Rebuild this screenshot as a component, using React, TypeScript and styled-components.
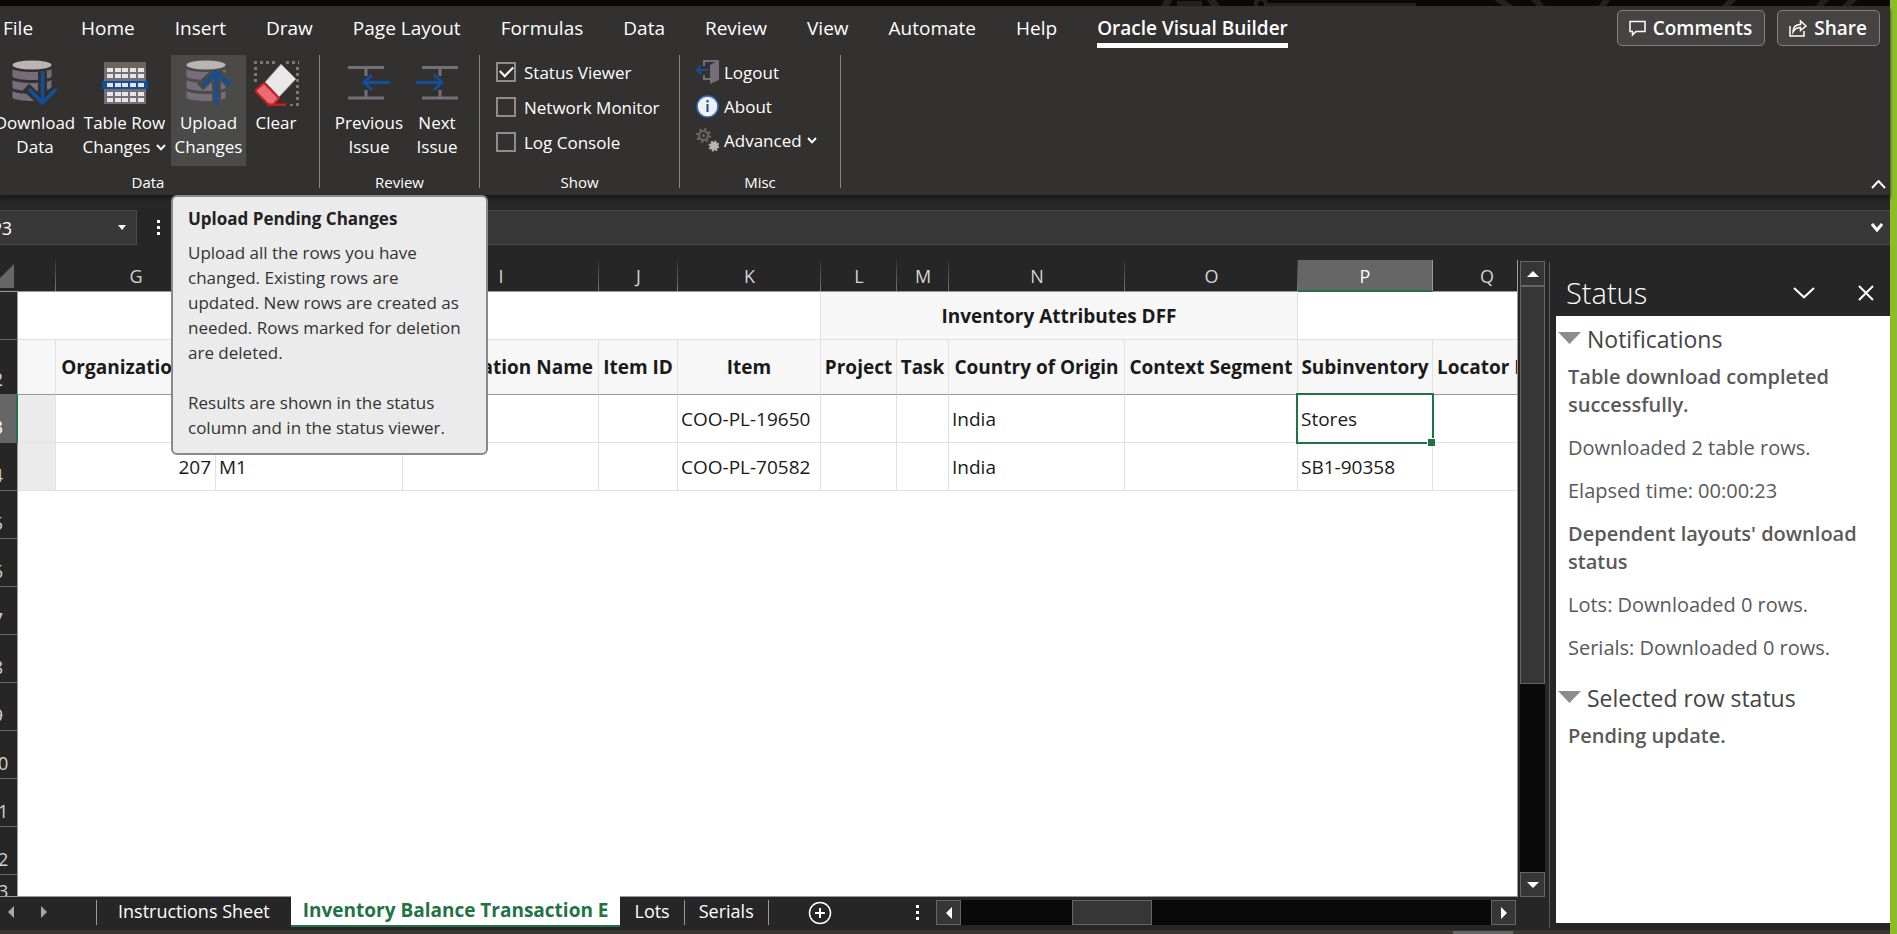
import React from "react";
import styled, { createGlobalStyle, css } from "styled-components";

const color = {
  ribbon: "#32312f",
  hover: "#4a4a48",
  chrome: "#262626",
  field: "#383838",
  line: "#666666",
  green: "#217346",
  blue: "#124f98",
  iconGrey: "#756d78",
};

const GlobalStyle = createGlobalStyle`
  * { box-sizing: border-box; }
  body { margin: 0; background: ${color.chrome}; font-family: "Open Sans", "Noto Sans", sans-serif; }
  button, input { font: inherit; color: inherit; margin: 0; padding: 0; border: 0; background: none; }
  svg { display: block; flex: none; }
  p, h2, h3 { margin: 0; font-size: inherit; font-weight: 400; }
`;

const Screen = styled.div`
  display: flex;
  height: 100vh;
  overflow: hidden;
  color: #fff;
`;
const Window = styled.div`
  flex: 1;
  min-width: 0;
  display: flex;
  flex-direction: column;
`;
const Edge = styled.div`
  width: 7px;
  background: #8bbd27;
`;
const TitleStrip = styled.div`
  height: 6px;
  flex: none;
  display: flex;
  justify-content: flex-end;
  background: #090909;
  overflow: hidden;
`;

/* ---------- ribbon ---------- */
const Ribbon = styled.header`
  flex: none;
  height: 189px;
  background: ${color.ribbon};
  position: relative;
  z-index: 2;
  box-shadow: 0 3px 3px #1a1a19;
`;
const TabRow = styled.div`
  display: flex;
  justify-content: space-between;
  height: 49px;
  padding: 4px 10px 0 3px;
`;
const Tabs = styled.nav`
  display: flex;
  gap: 40px;
  font-size: 19px;
  line-height: 36px;
`;
const Tab = styled.a<{ $active?: boolean }>`
  height: 38px;
  color: #fff;
  text-decoration: none;
  white-space: nowrap;
  &:first-child {
    margin-right: 8px;
  }
  ${(p) =>
    p.$active &&
    css`
      font-weight: 600;
      border-bottom: 5px solid #fff;
    `}
`;
const Actions = styled.div`
  display: flex;
  gap: 12px;
`;
const ActionButton = styled.button`
  display: flex;
  align-items: center;
  gap: 7px;
  height: 36px;
  padding: 0 12px 0 11px;
  border: 1px solid #85837f;
  border-radius: 5px;
  background: #454442;
  font-size: 19px;
  font-weight: 600;
`;
const Groups = styled.div`
  display: flex;
  margin-left: -23px;
`;
const Group = styled.section<{ $width: number }>`
  width: ${(p) => p.$width}px;
  height: 133px;
  display: flex;
  flex-direction: column;
  justify-content: space-between;
  border-right: 1px solid #8a8886;
`;
const GroupTitle = styled.h2`
  font-size: 15px;
  line-height: 12px;
  text-align: center;
`;
const ButtonRow = styled.div<{ $pad: number }>`
  display: flex;
  padding-left: ${(p) => p.$pad}px;
`;
const ToolWrap = styled.div`
  position: relative;
`;
const Tool = styled.button<{ $width: number; $hover?: boolean }>`
  display: flex;
  flex-direction: column;
  align-items: center;
  gap: 5px;
  width: ${(p) => p.$width}px;
  height: 111px;
  padding-top: 5px;
  background: ${(p) => (p.$hover ? color.hover : "none")};
  font-size: 17px;
  line-height: 24px;
  white-space: nowrap;
`;
const ToolText = styled.span`
  display: flex;
  align-items: center;
  justify-content: center;
  gap: 6px;
`;
const Column = styled.div<{ $gap: number }>`
  display: flex;
  flex-direction: column;
  gap: ${(p) => p.$gap}px;
  padding: 5px 0 0 16px;
  font-size: 17px;
`;
const CheckLabel = styled.label`
  display: flex;
  align-items: center;
  gap: 8px;
  height: 24px;
`;
const CheckBox = styled.input`
  appearance: none;
  width: 20px;
  height: 20px;
  border: 2px solid #8f8d8b;
  display: grid;
  place-items: center;
  &:checked::after {
    content: "";
    width: 11px;
    height: 6px;
    margin-bottom: 4px;
    border: solid #fff;
    border-width: 0 0 2px 2px;
    rotate: -45deg;
  }
`;
const SmallTool = styled.button`
  display: flex;
  align-items: center;
  gap: 5px;
  height: 24px;
`;
const CollapseButton = styled.button`
  position: absolute;
  right: 4px;
  bottom: 6px;
`;

const Tooltip = styled.div`
  position: absolute;
  top: 140px;
  left: 0;
  width: 317px;
  padding: 9px 15px 13px;
  border: 2px solid #8a8a8a;
  border-radius: 6px;
  background: #ebebeb;
  color: #333;
  font-size: 17px;
  line-height: 25px;
`;
const TooltipTitle = styled.h3`
  margin-bottom: 9px;
  color: #222;
  font-weight: 700;
`;
const TooltipText = styled.p`
  white-space: nowrap;
  & + & {
    margin-top: 25px;
  }
`;

/* ---------- formula bar ---------- */
const FormulaBar = styled.div`
  flex: none;
  display: flex;
  align-items: center;
  height: 65px;
  background: ${color.chrome};
`;
const NameBox = styled.div`
  display: flex;
  align-items: center;
  width: 137px;
  height: 35px;
  padding-right: 10px;
  border: 1px solid #4a4a4a;
  border-left: 0;
  background: ${color.field};
`;
const NameInput = styled.input`
  flex: 1;
  min-width: 0;
  font-size: 18px;
  text-indent: -9px;
`;
const FormulaField = styled.div`
  flex: 1;
  display: flex;
  align-items: center;
  height: 35px;
  margin-left: 20px;
  padding-right: 7px;
  border: 1px solid #4a4a4a;
  border-right: 0;
  background: ${color.field};
`;
const FormulaInput = styled.input`
  flex: 1;
`;
const Dots = styled.div`
  display: flex;
  flex-direction: column;
  gap: 3px;
  margin-left: 20px;
  i {
    width: 3px;
    height: 3px;
    background: #fff;
  }
`;

/* ---------- workspace ---------- */
const Workspace = styled.main`
  flex: 1;
  min-height: 0;
  display: flex;
  background: ${color.chrome};
`;
const Book = styled.div`
  flex: 1;
  min-width: 0;
  display: flex;
  flex-direction: column;
`;
const SheetArea = styled.div`
  flex: 1;
  min-height: 0;
  display: flex;
`;
const GridFrame = styled.div`
  flex: 1;
  min-width: 0;
  overflow: hidden;
  border: solid #999;
  border-width: 0 1px 1px 0;
`;
/* The last column runs on past the frame, so the table is wider than it. */
const Sheet = styled.table`
  width: calc(100% + 24px);
  table-layout: fixed;
  border-collapse: separate;
  border-spacing: 0;
  font-size: 19px;
  line-height: 24px;
  color: #1a1a1a;
  th,
  td {
    padding: 0;
  }
`;
const Letter = styled.th<{ $selected?: boolean; $last?: boolean }>`
  height: 32px;
  border-bottom: 1px solid #999;
  background: ${color.chrome};
  color: #d4d4d4;
  font-size: 18px;
  font-weight: 400;
  ${(p) =>
    !p.$last &&
    css`
      background: linear-gradient(#333, #777) right / 1px 100% no-repeat ${color.chrome};
    `}
  ${(p) =>
    p.$selected &&
    css`
      background: #666;
      color: #fff;
      border-bottom: 2px solid ${color.green};
      border-right: 1px solid #999;
      && {
        padding-top: 1px;
      }
    `}
`;
const RowHead = styled.th<{ $height: number; $selected?: boolean }>`
  height: ${(p) => p.$height}px;
  border-right: 1px solid #999;
  border-bottom: 1px solid ${color.line};
  background: ${color.chrome};
  color: #d4d4d4;
  font-size: 18px;
  font-weight: 400;
  vertical-align: bottom;
  ${(p) =>
    p.$selected &&
    css`
      background: #666;
      border-right: 2px solid ${color.green};
      color: #fff;
    `}
`;
const RowNumber = styled.span`
  display: block;
  width: 36px;
  margin: 0 0 3px -20px;
`;
const Cell = styled.td<{ $align?: "right"; $locked?: boolean }>`
  position: relative;
  border-right: 1px solid #e1e1e1;
  border-bottom: 1px solid #e1e1e1;
  background: ${(p) => (p.$locked ? "#ebebeb" : "#fff")};
  && {
    padding: 1px 4px 0 3px;
  }
  text-align: ${(p) => p.$align || "left"};
  white-space: nowrap;
`;
const HeadCell = styled.th`
  border-right: 1px solid #e1e1e1;
  border-bottom: 1px solid #999;
  background: #f7f7f7;
  font-weight: 700;
  white-space: nowrap;
  overflow: hidden;
`;
const LastHeadCell = styled(HeadCell)`
  text-align: left;
  && {
    padding-left: 4px;
  }
`;
const BandBlank = styled.td<{ $edge?: boolean }>`
  background: #fff;
  border-bottom: 1px solid #e1e1e1;
  border-right: ${(p) => (p.$edge ? "1px solid #e1e1e1" : "0")};
`;
const Band = styled.th`
  background: #f7f7f7;
  border-right: 1px solid #e1e1e1;
  border-bottom: 1px solid #e1e1e1;
  font-weight: 700;
`;
const Blank = styled.td`
  background: #fff;
`;
const Selection = styled.div`
  position: absolute;
  z-index: 1;
  inset: -2px;
  border: 2px solid ${color.green};
  &::after {
    content: "";
    position: absolute;
    right: -3px;
    bottom: -4px;
    width: 7px;
    height: 7px;
    border: solid #fff;
    border-width: 1px 0 0 1px;
    background: ${color.green};
  }
`;

/* ---------- scroll bars ---------- */
const VScroll = styled.div`
  width: 31px;
  padding: 1px 4px 0 2px;
  display: flex;
  flex-direction: column;
`;
const ScrollButton = styled.button`
  flex: none;
  display: grid;
  place-items: center;
  width: 25px;
  height: 25px;
  border: 1px solid ${color.line};
  background: #363636;
`;
const VTrack = styled.div`
  flex: 1;
  background: #090909;
`;
const VThumb = styled.div`
  height: 68%;
  border: 1px solid ${color.line};
  background: #363636;
`;
const HScroll = styled.div`
  width: 580px;
  display: flex;
`;
const HTrack = styled.div`
  flex: 1;
  background: #090909;
`;
const HThumb = styled.div`
  width: 15%;
  height: 25px;
  margin-left: 21%;
  border: 1px solid ${color.line};
  background: #363636;
`;

/* ---------- sheet tabs ---------- */
const SheetBar = styled.footer`
  flex: none;
  display: flex;
  align-items: flex-start;
  height: 33px;
  padding-right: 33px;
`;
const SheetNav = styled.div`
  display: flex;
  gap: 27px;
  width: 96px;
  padding: 9px 0 0 8px;
`;
const SheetTab = styled.button<{ $pad: number; $first?: boolean; $last?: boolean }>`
  height: 25px;
  margin-top: 3px;
  padding: 0 ${(p) => p.$pad}px 3px;
  border: solid #999;
  border-width: 0 ${(p) => (p.$last ? 1 : 0)}px 0 ${(p) => (p.$first ? 1 : 0)}px;
  font-size: 18px;
  line-height: 22px;
  white-space: nowrap;
`;
const ActiveSheet = styled.button`
  height: 31px;
  margin-top: -1px;
  padding: 0 12px 2px;
  border-bottom: 2px solid ${color.green};
  background: #fff;
  color: ${color.green};
  font-size: 19px;
  font-weight: 700;
  line-height: 26px;
  white-space: nowrap;
  z-index: 1;
`;
const AddSheet = styled.button`
  margin: 4px 0 0 39px;
`;
const BarEnd = styled.div`
  display: flex;
  align-items: center;
  gap: 17px;
  height: 25px;
  margin: 3px 0 0 auto;
`;
const StatusStrip = styled.div`
  flex: none;
  display: flex;
  justify-content: flex-end;
  height: 4px;
  padding: 1px 377px 0 0;
  background: #383735;
`;
const StripHandle = styled.div`
  width: 60px;
  background: #666;
`;

/* ---------- status pane ---------- */
const Pane = styled.aside`
  width: 341px;
  flex: none;
  display: flex;
  flex-direction: column;
  margin: 2px 0;
  padding: 0 0 5px 6px;
  border-left: 1px solid #5a5a5a;
`;
const PaneHeader = styled.div`
  display: flex;
  align-items: center;
  height: 54px;
  padding: 8px 16px 0 10px;
`;
const PaneTitle = styled.h2`
  flex: 1;
  font-size: 29px;
  font-weight: 300;
  line-height: 36px;
`;
const PaneButton = styled.button`
  margin-left: 43px;
`;
const PaneBody = styled.div`
  flex: 1;
  padding: 8px 10px 0 0;
  background: #fff;
  color: #595959;
  font-size: 20px;
  line-height: 28px;
  white-space: nowrap;
`;
const SectionTitle = styled.h3`
  display: flex;
  gap: 6px;
  margin-bottom: 9px;
  color: #444;
  font-size: 23px;
  line-height: 30px;
  & > svg {
    margin: 8px 0 0 2px;
  }
`;
const Messages = styled.div`
  display: flex;
  flex-direction: column;
  gap: 15px;
  margin-bottom: 21px;
  padding-left: 12px;
`;
const Message = styled.p<{ $strong?: boolean }>`
  font-weight: ${(p) => (p.$strong ? 600 : 400)};
`;

/* ---------- drawings ---------- */
const Chevron = ({ w, h, stroke = 2, up }: { w: number; h: number; stroke?: number; up?: boolean }) => (
  <svg width={w} height={h} viewBox={`0 0 ${w} ${h}`} fill="none" stroke="currentColor" strokeWidth={stroke}>
    <path d={up ? `M1 ${h - 1} L${w / 2} 1 L${w - 1} ${h - 1}` : `M1 1 L${w / 2} ${h - 1 - stroke / 3} L${w - 1} 1`} />
  </svg>
);
const triangles = {
  up: "M0 6 L6 0 L12 6Z",
  down: "M0 0 L12 0 L6 6Z",
  left: "M6 0 L6 12 L0 6Z",
  right: "M0 0 L6 6 L0 12Z",
};
const Triangle = ({ dir, fill = "#fff" }: { dir: keyof typeof triangles; fill?: string }) => {
  const tall = dir === "left" || dir === "right";
  return (
    <svg width={tall ? 6 : 12} height={tall ? 12 : 6}>
      <path d={triangles[dir]} fill={fill} />
    </svg>
  );
};
const SectionArrow = () => (
  <svg width="23" height="12">
    <path d="M0 0H23L11.500 12Z" fill="#8c8c8c" />
  </svg>
);

const DatabaseIcon = ({ up }: { up?: boolean }) => {
  const arrow = up ? "M30.500 46V13M17 25.500L30.500 12L44 25.500" : "M30.500 11V43M17 29L30.500 43L44 29";
  const halo = up ? "M30.500 46V15M14 27L30.500 11L47 27" : "M30.500 11V40M14 27L30.500 43L46 27";
  return (
    <svg width="46" height="46" viewBox="0 0 46 46" fill="none">
      <g fill={color.iconGrey}>
        <path d="M.5 9C6 13 34 13 39.500 9V17C34 21 6 21 .5 17Z" />
        <path d="M.5 20C6 24 34 24 39.500 20V28C34 32 6 32 .5 28Z" />
        <path d="M.5 31C6 35 34 35 39.500 31V38C34 42 6 42 .5 38Z" />
      </g>
      <path d={halo} stroke={up ? color.hover : color.ribbon} strokeWidth="9" />
      <ellipse cx="20" cy="5" rx="19.500" ry="4.500" fill="#b8b5b3" />
      <path d={arrow} stroke={color.blue} strokeWidth="3.500" />
    </svg>
  );
};
const TableIcon = () => (
  <svg width="46" height="46" viewBox="0 0 46 46">
    <rect x="2" y="2" width="42" height="42" fill={color.iconGrey} />
    <rect x="2" y="2" width="42" height="6" fill="#6b655c" />
    <rect x="0" y="21" width="46" height="8" fill={color.blue} />
    {[8, 14, 23, 32, 38].map((y) =>
      [5, 13, 20, 28, 36].map((x) => <rect key={`${x}-${y}`} x={x} y={y} width="6" height="4" fill="#e6e6e6" />)
    )}
  </svg>
);
const ClearIcon = () => (
  <svg width="46" height="46" viewBox="0 0 46 46">
    <g stroke="#7d7672" strokeWidth="3" strokeDasharray="3 3" fill="none">
      <path d="M1 2.500H22M33 2.500H46" />
      <path d="M2.500 7V23M44.500 7V46" />
      <path d="M37 45.500H46" />
    </g>
    <path d="M28 4L43 19L26 37L12 22Z" fill="#e8e8e8" stroke="#8a8482" />
    <path d="M11 23L26 38L21 44Q18 47 15 44L4 33Q2 31 4 29Z" fill="#ea6a78" stroke="#c4201c" strokeWidth="2" />
    <path d="M15 45H33" stroke="#c4201c" strokeWidth="3" />
  </svg>
);
const IssueIcon = ({ next }: { next?: boolean }) => (
  <svg width="42" height="46" viewBox="0 0 42 46" fill="none" strokeWidth="3">
    <g stroke={color.iconGrey}>
      <path d={next ? "M6 7.500H42M6 38H42M24 9V16M24 30V37" : "M0 7.500H36M0 38H36M18 9V16M18 30V37"} />
    </g>
    <path d={next ? "M0 22.500H25M18 15L26 22.500L18 30" : "M42 22.500H17M24 15L16 22.500L24 30"} stroke={color.blue} />
  </svg>
);
const LogoutIcon = () => (
  <svg width="23" height="24" viewBox="0 0 23 24" fill="none">
    <path d="M8 6V1H22M8 15V19H14" stroke={color.iconGrey} strokeWidth="2" />
    <path d="M14 5L23 0V20L14 24Z" fill={color.iconGrey} />
    <path d="M12 10H1M5 6L1 10L5 14" stroke={color.blue} strokeWidth="2" />
  </svg>
);
const AboutIcon = () => (
  <svg width="23" height="23" viewBox="0 0 23 23">
    <circle cx="11.500" cy="11.500" r="10.500" fill="#f0f0f0" stroke="#2a6fc0" strokeWidth="1.500" />
    <path d="M11.500 9V17M11.500 5V7.500" stroke={color.blue} strokeWidth="2" />
  </svg>
);
const GearsIcon = () => (
  <svg width="23" height="24" viewBox="0 0 23 24" fill="none">
    <circle cx="7.500" cy="7.500" r="6.500" stroke="#6f6964" strokeWidth="2" strokeDasharray="2.100 3" />
    <circle cx="7.500" cy="7.500" r="4.500" stroke="#6f6964" strokeWidth="2" />
    <circle cx="7.500" cy="7.500" r="1.500" fill="#6f6964" />
    <circle cx="18" cy="18" r="4" fill="#b8b5b3" />
    <circle cx="18" cy="18" r="4.500" stroke="#b8b5b3" strokeWidth="2" strokeDasharray="2 1.500" />
  </svg>
);
const CommentIcon = () => (
  <svg width="17" height="17" viewBox="0 0 17 17" fill="none" stroke="#fff" strokeWidth="1.500">
    <path d="M1 1.500H16V11.500H7L3.500 15V11.500H1Z" />
  </svg>
);
const ShareIcon = () => (
  <svg width="18" height="18" viewBox="0 0 18 18" fill="none" stroke="#fff" strokeWidth="1.500">
    <path d="M1 7V17H15V12" />
    <path d="M4 13C4 8 7 5.500 11.500 5.500V2L17 7L11.500 11.500V8.500C8 8.500 6 9.500 4 13Z" />
  </svg>
);
const TitlePattern = () => (
  <svg width="740" height="6" viewBox="0 0 740 6" fill="none" stroke="#222" strokeWidth="7">
    <g transform="translate(14 0)">
      <path d="M13 1H38V6H13Z" fill="#222" stroke="none" />
      <path d="M6 -3L0 8M45 -3L53 8" />
      <circle cx="97" cy="4" r="5" strokeWidth="4" />
      <path d="M104 4.500H252" strokeWidth="3" />
    </g>
    <path d="M344 -4L362 9M381 -4L394 9M460 -5L450 9M585 -3L573 9M679 -4L666 9M707 -4L693 9" strokeWidth="6" />
  </svg>
);

/* ---------- data ---------- */
const ribbonTabs = [
  "File", "Home", "Insert", "Draw", "Page Layout", "Formulas", "Data", "Review", "View", "Automate", "Help",
  "Oracle Visual Builder",
];
interface ColumnInfo {
  id: string;
  width: number;
  letter?: string;
  title?: string;
}
const columns: ColumnInfo[] = [
  { id: "status", width: 38 },
  { id: "orgId", letter: "G", width: 160, title: "Organization ID" },
  { id: "orgCode", width: 187 },
  { id: "orgName", letter: "I", width: 196, title: "Organization Name" },
  { id: "itemId", letter: "J", width: 79, title: "Item ID" },
  { id: "item", letter: "K", width: 143, title: "Item" },
  { id: "project", letter: "L", width: 76, title: "Project" },
  { id: "task", letter: "M", width: 52, title: "Task" },
  { id: "country", letter: "N", width: 176, title: "Country of Origin" },
  { id: "context", letter: "O", width: 173, title: "Context Segment" },
  { id: "subinventory", letter: "P", width: 135, title: "Subinventory" },
];
const dataRows: { n: number; values: Record<string, string> }[] = [
  { n: 3, values: { item: "COO-PL-19650", country: "India", subinventory: "Stores" } },
  { n: 4, values: { orgId: "207", orgCode: "M1", item: "COO-PL-70582", country: "India", subinventory: "SB1-90358" } },
];
const emptyRows = [5, 6, 7, 8, 9, 10, 11, 12];

const RowLabel = ({ n, height, selected }: { n: number; height: number; selected?: boolean }) => (
  <RowHead scope="row" $height={height} $selected={selected}>
    <RowNumber>{n}</RowNumber>
  </RowHead>
);

const SheetGrid = () => (
  <Sheet>
    <colgroup>
      <col width={18} />
      {columns.map((c) => (
        <col key={c.id} width={c.width} />
      ))}
      <col />
    </colgroup>
    <thead>
      <tr>
        <Letter $last>
          <svg width="14" height="24">
            <path d="M14 0V24H-10Z" fill="#666" />
          </svg>
        </Letter>
        {columns.map((c) => (
          <Letter key={c.id} scope="col" $selected={c.letter === "P"}>
            {c.letter}
          </Letter>
        ))}
        <Letter scope="col" $last>
          Q
        </Letter>
      </tr>
    </thead>
    <tbody>
      <tr>
        <RowHead $height={48} />
        <BandBlank colSpan={6} $edge />
        <Band colSpan={4}>Inventory Attributes DFF</Band>
        <BandBlank colSpan={2} />
      </tr>
      <tr>
        <RowLabel n={2} height={55} />
        {columns.map((c) => (
          <HeadCell key={c.id}>{c.title}</HeadCell>
        ))}
        <LastHeadCell>Locator ID</LastHeadCell>
      </tr>
      {dataRows.map((row) => (
        <tr key={row.n}>
          <RowLabel n={row.n} height={48} selected={row.n === 3} />
          {columns.map((c) => (
            <Cell key={c.id} $locked={c.id === "status"} $align={c.id === "orgId" ? "right" : undefined}>
              {row.values[c.id]}
              {row.n === 3 && c.id === "subinventory" && <Selection />}
            </Cell>
          ))}
          <Cell />
        </tr>
      ))}
      {emptyRows.map((n) => (
        <tr key={n}>
          <RowLabel n={n} height={48} />
          <Blank colSpan={12} />
        </tr>
      ))}
      <tr>
        <RowLabel n={13} height={32} />
        <Blank colSpan={12} />
      </tr>
    </tbody>
  </Sheet>
);

export default function App() {
  return (
    <Screen>
      <GlobalStyle />
      <Window>
        <TitleStrip>
          <TitlePattern />
        </TitleStrip>

        <Ribbon>
          <TabRow>
            <Tabs aria-label="Ribbon">
              {ribbonTabs.map((t) => (
                <Tab key={t} href="#" $active={t === "Oracle Visual Builder"}>
                  {t}
                </Tab>
              ))}
            </Tabs>
            <Actions>
              <ActionButton>
                <CommentIcon />
                Comments
              </ActionButton>
              <ActionButton>
                <ShareIcon />
                Share
              </ActionButton>
            </Actions>
          </TabRow>

          <Groups>
            <Group $width={343}>
              <ButtonRow $pad={15}>
                <Tool $width={86}>
                  <DatabaseIcon />
                  <span>
                    Download
                    <br />
                    Data
                  </span>
                </Tool>
                <Tool $width={93}>
                  <TableIcon />
                  <span>
                    Table Row
                    <ToolText>
                      Changes <Chevron w={10} h={7} />
                    </ToolText>
                  </span>
                </Tool>
                <ToolWrap>
                  <Tool $width={75} $hover aria-describedby="upload-tip">
                    <DatabaseIcon up />
                    <span>
                      Upload
                      <br />
                      Changes
                    </span>
                  </Tool>
                  <Tooltip role="tooltip" id="upload-tip">
                    <TooltipTitle>Upload Pending Changes</TooltipTitle>
                    <TooltipText>
                      Upload all the rows you have
                      <br />
                      changed. Existing rows are
                      <br />
                      updated. New rows are created as
                      <br />
                      needed. Rows marked for deletion
                      <br />
                      are deleted.
                    </TooltipText>
                    <TooltipText>
                      Results are shown in the status
                      <br />
                      column and in the status viewer.
                    </TooltipText>
                  </Tooltip>
                </ToolWrap>
                <Tool $width={60}>
                  <ClearIcon />
                  <span>Clear</span>
                </Tool>
              </ButtonRow>
              <GroupTitle>Data</GroupTitle>
            </Group>

            <Group $width={160}>
              <ButtonRow $pad={13}>
                <Tool $width={72}>
                  <IssueIcon />
                  <span>
                    Previous
                    <br />
                    Issue
                  </span>
                </Tool>
                <Tool $width={64}>
                  <IssueIcon next />
                  <span>
                    Next
                    <br />
                    Issue
                  </span>
                </Tool>
              </ButtonRow>
              <GroupTitle>Review</GroupTitle>
            </Group>

            <Group $width={200}>
              <Column $gap={11}>
                <CheckLabel>
                  <CheckBox type="checkbox" defaultChecked />
                  Status Viewer
                </CheckLabel>
                <CheckLabel>
                  <CheckBox type="checkbox" />
                  Network Monitor
                </CheckLabel>
                <CheckLabel>
                  <CheckBox type="checkbox" />
                  Log Console
                </CheckLabel>
              </Column>
              <GroupTitle>Show</GroupTitle>
            </Group>

            <Group $width={161}>
              <Column $gap={10}>
                <SmallTool>
                  <LogoutIcon />
                  Logout
                </SmallTool>
                <SmallTool>
                  <AboutIcon />
                  About
                </SmallTool>
                <SmallTool>
                  <GearsIcon />
                  Advanced
                  <Chevron w={10} h={7} />
                </SmallTool>
              </Column>
              <GroupTitle>Misc</GroupTitle>
            </Group>
          </Groups>

          <CollapseButton aria-label="Collapse ribbon">
            <Chevron w={15} h={9} up />
          </CollapseButton>
        </Ribbon>

        <FormulaBar>
          <NameBox>
            <NameInput aria-label="Name box" defaultValue="P3" />
            <svg width="8" height="5">
              <path d="M0 0H8L4 5Z" fill="#fff" />
            </svg>
          </NameBox>
          <Dots>
            <i />
            <i />
            <i />
          </Dots>
          <FormulaField>
            <FormulaInput aria-label="Formula" />
            <Chevron w={12} h={9} stroke={3} />
          </FormulaField>
        </FormulaBar>

        <Workspace>
          <Book>
            <SheetArea>
              <GridFrame>
                <SheetGrid />
              </GridFrame>
              <VScroll>
                <ScrollButton aria-label="Scroll up">
                  <Triangle dir="up" />
                </ScrollButton>
                <VTrack>
                  <VThumb />
                </VTrack>
                <ScrollButton aria-label="Scroll down">
                  <Triangle dir="down" />
                </ScrollButton>
              </VScroll>
            </SheetArea>
            <SheetBar>
              <SheetNav>
                <Triangle dir="left" fill="#a6a6a6" />
                <Triangle dir="right" fill="#a6a6a6" />
              </SheetNav>
              <SheetTab $pad={21} $first>
                Instructions Sheet
              </SheetTab>
              <ActiveSheet>Inventory Balance Transaction E</ActiveSheet>
              <SheetTab $pad={14} $last>
                Lots
              </SheetTab>
              <SheetTab $pad={14} $last>
                Serials
              </SheetTab>
              <AddSheet aria-label="New sheet">
                <svg width="24" height="24" viewBox="0 0 24 24" fill="none" stroke="#fff">
                  <circle cx="12" cy="12" r="10.500" strokeWidth="1.500" />
                  <path d="M12 7V17M7 12H17" strokeWidth="2" />
                </svg>
              </AddSheet>
              <BarEnd>
                <Dots>
                  <i />
                  <i />
                  <i />
                </Dots>
                <HScroll>
                  <ScrollButton aria-label="Scroll left">
                    <Triangle dir="left" />
                  </ScrollButton>
                  <HTrack>
                    <HThumb />
                  </HTrack>
                  <ScrollButton aria-label="Scroll right">
                    <Triangle dir="right" />
                  </ScrollButton>
                </HScroll>
              </BarEnd>
            </SheetBar>
          </Book>

          <Pane>
            <PaneHeader>
              <PaneTitle>Status</PaneTitle>
              <PaneButton aria-label="Pane options">
                <Chevron w={22} h={12} />
              </PaneButton>
              <PaneButton aria-label="Close">
                <svg width="16" height="16" stroke="#fff" strokeWidth="2">
                  <path d="M1 1L15 15M15 1L1 15" />
                </svg>
              </PaneButton>
            </PaneHeader>
            <PaneBody>
              <SectionTitle>
                <SectionArrow />
                Notifications
              </SectionTitle>
              <Messages>
                <Message $strong>
                  Table download completed
                  <br />
                  successfully.
                </Message>
                <Message>Downloaded 2 table rows.</Message>
                <Message>Elapsed time: 00:00:23</Message>
                <Message $strong>
                  Dependent layouts' download
                  <br />
                  status
                </Message>
                <Message>Lots: Downloaded 0 rows.</Message>
                <Message>Serials: Downloaded 0 rows.</Message>
              </Messages>
              <SectionTitle>
                <SectionArrow />
                Selected row status
              </SectionTitle>
              <Messages>
                <Message $strong>Pending update.</Message>
              </Messages>
            </PaneBody>
          </Pane>
        </Workspace>

        <StatusStrip>
          <StripHandle />
        </StatusStrip>
      </Window>
      <Edge />
    </Screen>
  );
}
